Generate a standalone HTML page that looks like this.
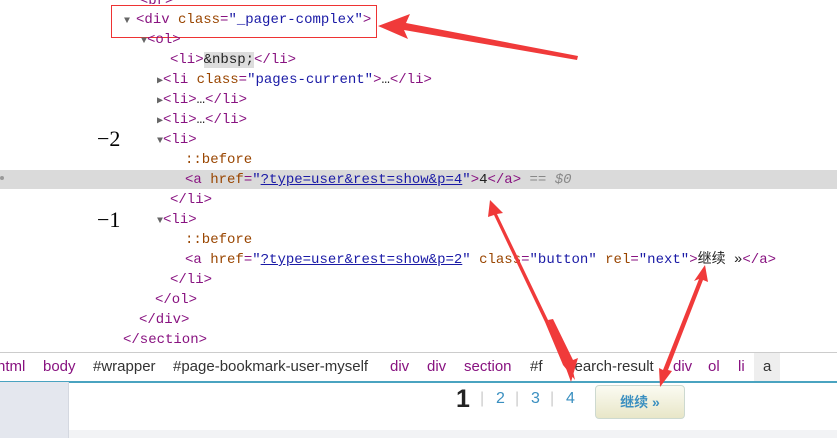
<!DOCTYPE html>
<html><head><meta charset="utf-8"><style>
body{margin:0;width:837px;height:438px;overflow:hidden;background:#fff;position:relative;font-family:"Liberation Mono",monospace;font-size:14px}
.l{position:absolute;white-space:pre;line-height:20px;height:20px;color:#881280}
.at{color:#994500}.av{color:#1a1aa6}.lk{color:#1a1aa6;text-decoration:underline}
.tx{color:#222}
.tri{color:#666;font-size:10px}
.hl{position:absolute;left:0;top:170px;width:837px;height:19px;background:#dadada}
.bc{position:absolute;top:352px;left:0;width:837px;height:28px;border-top:1px solid #ccc;border-bottom:2px solid #4aa3c0;font-family:"Liberation Sans",sans-serif;font-size:15px;line-height:28px}
.bc span{position:absolute;top:0;white-space:pre;color:#881280}
.bc .k{color:#333}
.num{position:absolute;font-family:"Liberation Serif",serif;font-size:22px;color:#000}
.pg{position:absolute;font-family:'Liberation Sans',sans-serif;line-height:30px;top:384px}
</style></head><body>
<div class="hl"></div>
<div class="l" style="left:123px;top:-9px">  &lt;br&gt;</div>
<div class="l" style="left:124px;top:10px"><span class="tri">▼ </span>&lt;div <span class="at">class</span>=<span class="av">"_pager-complex"</span>&gt;</div>
<div style="position:absolute;left:111px;top:5px;width:264px;height:31px;border:1px solid #e33"></div>
<div class="l" style="left:141px;top:30px"><span class="tri">▼</span>&lt;ol&gt;</div>
<div class="l" style="left:170px;top:50px">&lt;li&gt;<span class="tx" style="background:#ddd">&amp;nbsp;</span>&lt;/li&gt;</div>
<div class="l" style="left:157px;top:70px"><span class="tri">▶</span>&lt;li <span class="at">class</span>=<span class="av">"pages-current"</span>&gt;<span class="tx">…</span>&lt;/li&gt;</div>
<div class="l" style="left:157px;top:90px"><span class="tri">▶</span>&lt;li&gt;<span class="tx">…</span>&lt;/li&gt;</div>
<div class="l" style="left:157px;top:110px"><span class="tri">▶</span>&lt;li&gt;<span class="tx">…</span>&lt;/li&gt;</div>
<div class="l" style="left:157px;top:130px"><span class="tri">▼</span>&lt;li&gt;</div>
<div class="l at" style="left:185px;top:150px">::before</div>
<div class="l" style="left:185px;top:170px">&lt;a <span class="at">href</span>=<span class="av">"</span><span class="lk">?type=user&amp;rest=show&amp;p=4</span><span class="av">"</span>&gt;<span class="tx">4</span>&lt;/a&gt; <span style="color:#888;font-style:italic">== $0</span></div>
<div class="l" style="left:170px;top:190px">&lt;/li&gt;</div>
<div class="l" style="left:157px;top:210px"><span class="tri">▼</span>&lt;li&gt;</div>
<div class="l at" style="left:185px;top:230px">::before</div>
<div class="l" style="left:185px;top:250px">&lt;a <span class="at">href</span>=<span class="av">"</span><span class="lk">?type=user&amp;rest=show&amp;p=2</span><span class="av">"</span> <span class="at">class</span>=<span class="av">"button"</span> <span class="at">rel</span>=<span class="av">"next"</span>&gt;<span class="tx" style="font-family:'Liberation Mono','Noto Sans CJK SC',monospace">继续 »</span>&lt;/a&gt;</div>
<div class="l" style="left:170px;top:270px">&lt;/li&gt;</div>
<div class="l" style="left:155px;top:290px">&lt;/ol&gt;</div>
<div class="l" style="left:139px;top:310px">&lt;/div&gt;</div>
<div class="l" style="left:123px;top:330px">&lt;/section&gt;</div>
<div class="num" style="left:97px;top:126px">−2</div>
<div class="num" style="left:97px;top:207px">−1</div>
<div style="position:absolute;left:0;top:176px;width:4px;height:4px;border-radius:2px;background:#999"></div>
<div class="bc"><span style="left:-3px">html</span><span style="left:43px">body</span><span class="k" style="left:93px">#wrapper</span><span class="k" style="left:173px">#page-bookmark-user-myself</span><span style="left:390px">div</span><span style="left:427px">div</span><span style="left:464px">section</span><span class="k" style="left:530px">#f</span><span class="k" style="left:567px">search-result</span><span style="left:673px">div</span><span style="left:708px">ol</span><span style="left:738px">li</span><span class="k" style="left:754px;background:#eee;padding:0 9px">a</span></div>
<div style="position:absolute;left:0;top:382px;width:68px;height:56px;background:#e4e7ee;border-right:1px solid #d4d8e0"></div>
<div style="position:absolute;left:69px;top:430px;width:768px;height:8px;background:#f2f3f5"></div>
<div class="pg" style="left:456px;font-size:25px;font-weight:bold;color:#222">1</div>
<div class="pg" style="left:480px;color:#ccc;font-size:16px">|</div>
<div class="pg" style="left:496px;color:#3a8fc0;font-size:16px">2</div>
<div class="pg" style="left:515px;color:#ccc;font-size:16px">|</div>
<div class="pg" style="left:531px;color:#3a8fc0;font-size:16px">3</div>
<div class="pg" style="left:550px;color:#ccc;font-size:16px">|</div>
<div class="pg" style="left:566px;color:#3a8fc0;font-size:16px">4</div>
<div style="position:absolute;left:595px;top:385px;width:88px;height:32px;border:1px solid #cdd9d0;border-radius:4px;background:linear-gradient(#fbfbf2,#e8e6c8);color:#3a8fc0;font-family:'Liberation Sans','Noto Sans CJK SC',sans-serif;font-weight:bold;font-size:14px;text-align:center;line-height:32px">继续 »</div>
<svg style="position:absolute;left:0;top:0" width="837" height="438">
<g fill="#f03a3a">
<polygon points="378,26 410,14 406,23 578,56 577,60 404,30 408,39"/>
<polygon points="490,200 503,213 497,214 548,320 571,362 575,380 563,365 545,322 494,215 488,217"/>
<polygon points="571,382 563,360 570,362 548,320 553,319 573,360 578,358"/>
<polygon points="705,265 708,282 703,280 668,370 672,371 660,387 659,368 663,370 699,279 694,281"/>
</g>
</svg>
</body></html>
